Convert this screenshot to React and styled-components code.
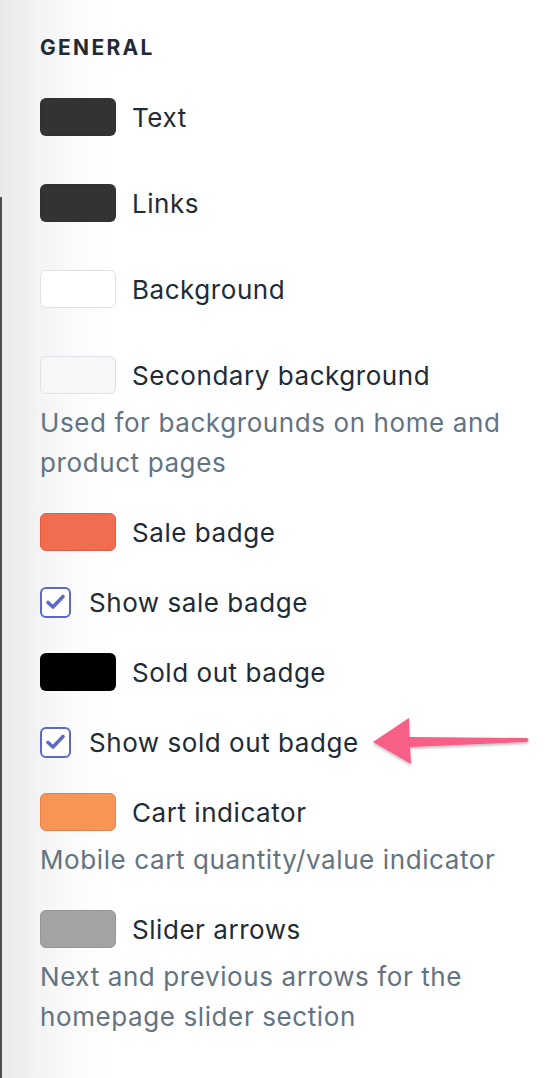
import styled, { createGlobalStyle } from 'styled-components'

const Global = createGlobalStyle`
    html, body {
        margin: 0;
        padding: 0;
        background: #fff;
    }
    body {
        font-family: Inter, "Noto Sans", "Liberation Sans", sans-serif;
        -webkit-font-smoothing: antialiased;
    }
`
const Page = styled.div`
    width: 560px;
    height: 1078px;
    display: flex;
    background: linear-gradient(to right, #e9e9e9 0px, #f4f4f4 40px, #fcfcfc 80px, #fff 110px);
    overflow: hidden;
`
const Edge = styled.div`
    width: 2px;
    margin-top: 197px;
    background: #4d4d4d;
    flex-shrink: 0;
`
const Panel = styled.div`
    flex: 1;
    padding: 30px 0 0 38px;
    display: flex;
    flex-direction: column;
`
const Heading = styled.h2`
    margin: 0;
    font-size: 21px;
    line-height: 36px;
    font-weight: 700;
    letter-spacing: 2.3px;
    color: #212b36;
`
const Setting = styled.div`
    margin-top: ${p => p.$gap}px;
    display: flex;
    flex-direction: column;
`
const Row = styled.div`
    position: relative;
    height: 40px;
    display: flex;
    align-items: center;
    gap: ${p => (p.$check ? 18 : 16)}px;
`
const Swatch = styled.div`
    width: 76px;
    height: 38px;
    box-sizing: border-box;
    border-radius: 6px;
    background: ${p => p.$color};
    border: 1px solid ${p => p.$border || 'rgba(0,0,0,0.08)'};
`
const Box = styled.div`
    width: 31px;
    height: 31px;
    box-sizing: border-box;
    border: 2px solid #5c6ac4;
    border-radius: 6px;
    background: #fff;
    display: flex;
    align-items: center;
    justify-content: center;
`
const Label = styled.span`
    font-size: 26px;
    color: #212b36;
    letter-spacing: 0.55px;
`
const Help = styled.p`
    margin: 8px 0 0;
    font-size: 26px;
    line-height: 40px;
    color: #637381;
    letter-spacing: 0.6px;
    max-width: 480px;
`
const Pointer = styled.svg`
    position: absolute;
    left: 330px;
    top: -10px;
    overflow: visible;
`

const Check = () => (
    <svg width="21" height="18" viewBox="0 0 21 18">
        <path d="M3 9.5 L8 14 L18 3.5" fill="none" stroke="#5c6ac4" strokeWidth="3.6" strokeLinecap="round" strokeLinejoin="round" />
    </svg>
)

const Arrow = () => (
    <Pointer width="165" height="60" viewBox="0 0 165 60">
        <defs>
            <filter id="sh" x="-10%" y="-20%" width="130%" height="150%">
                <feDropShadow dx="0" dy="1.5" stdDeviation="1.5" floodColor="#000" floodOpacity="0.3" />
            </filter>
        </defs>
        <path
            d="M3 30 L39 6 L39.5 25 L157 26 Q160 28 157 30 L40 35 L41 52 Z"
            fill="#f75e86"
            filter="url(#sh)"
        />
    </Pointer>
)

const items = [
    { type: 'color', label: 'Text', color: '#333333', gap: 31 },
    { type: 'color', label: 'Links', color: '#333333', gap: 46 },
    { type: 'color', label: 'Background', color: '#ffffff', border: '#dfe3e8', gap: 46 },
    { type: 'color', label: 'Secondary background', color: '#f7f7f7', border: '#dfe3e8', gap: 46, help: 'Used for backgrounds on home and product pages' },
    { type: 'color', label: 'Sale badge', color: '#f26c4f', border: '#dd5e42', gap: 29 },
    { type: 'check', label: 'Show sale badge', gap: 30 },
    { type: 'color', label: 'Sold out badge', color: '#000000', gap: 30 },
    { type: 'check', label: 'Show sold out badge', gap: 30, arrow: true },
    { type: 'color', label: 'Cart indicator', color: '#f79456', border: '#e2824a', gap: 30, help: 'Mobile cart quantity/value indicator' },
    { type: 'color', label: 'Slider arrows', color: '#a3a3a3', border: '#959595', gap: 29, help: 'Next and previous arrows for the homepage slider section' },
]

const App = () => {
    return (
        <Page>
            <Global />
            <Edge />
            <Panel>
                <Heading>GENERAL</Heading>
                {items.map(item => (
                    <Setting key={item.label} $gap={item.gap}>
                        <Row $check={item.type === 'check'}>
                            {item.type === 'color' ? (
                                <Swatch $color={item.color} $border={item.border} />
                            ) : (
                                <Box><Check /></Box>
                            )}
                            <Label>{item.label}</Label>
                            {item.arrow && <Arrow />}
                        </Row>
                        {item.help && <Help>{item.help}</Help>}
                    </Setting>
                ))}
            </Panel>
        </Page>
    )
}

export default App
